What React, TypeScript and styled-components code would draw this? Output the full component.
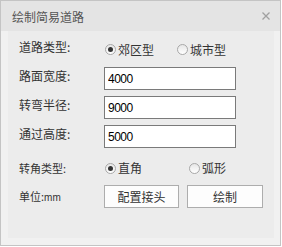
import styled, { createGlobalStyle } from "styled-components";

const GlobalStyle = createGlobalStyle`
  body {
    margin: 0;
    background: #ffffff;
    font-family: "Noto Sans CJK SC", "Noto Sans", sans-serif;
  }
`;

const Dialog = styled.div`
  width: 281px;
  height: 246px;
  box-sizing: border-box;
  border: 1px solid #c4c4c4;
  background: #f1f1f1;
  display: flex;
  flex-direction: column;
`;

const TitleBar = styled.div`
  height: 30px;
  flex-shrink: 0;
  background: #e4e4e4;
  display: flex;
  align-items: center;
  justify-content: space-between;
  padding: 0 10px 0 11px;
`;

const Title = styled.span`
  font-size: 12px;
  color: #555555;
`;

const Close = styled.svg`
  width: 8px;
  height: 8px;
`;

const Panel = styled.div`
  flex: 1;
  margin: 0 6px 7px 7px;
  background: #ececec;
  padding: 7px 0 0 11px;
  display: flex;
  flex-direction: column;
`;

const Row = styled.div<{ $h: number; $gap: number; $center?: boolean }>`
  display: flex;
  align-items: ${(p) => (p.$center ? "center" : "flex-start")};
  height: ${(p) => p.$h}px;
  margin-top: ${(p) => p.$gap}px;
`;

const Label = styled.span<{ $size?: number }>`
  width: 85px;
  flex-shrink: 0;
  font-size: ${(p) => p.$size ?? 12}px;
  line-height: 18px;
  color: #333333;
`;

const Unit = styled.span`
  font-family: "Liberation Sans", sans-serif;
  font-size: 10px;
`;

const Input = styled.input`
  width: 132px;
  height: 23px;
  box-sizing: border-box;
  border: 1px solid #7a7a7a;
  background: #ffffff;
  padding: 0 3px;
  margin: 0;
  font-family: "Liberation Sans", sans-serif;
  font-size: 12px;
  letter-spacing: -0.5px;
  color: #000000;
  outline: none;
`;

const Options = styled.div`
  display: flex;
  align-self: center;
  margin-left: 1px;
`;

const Option = styled.label<{ $w: number }>`
  display: flex;
  align-items: center;
  gap: 2px;
  width: ${(p) => p.$w}px;
  font-size: 12px;
  line-height: 18px;
  color: #333333;
`;

const Circle = styled.span<{ $checked?: boolean }>`
  position: relative;
  width: 11px;
  height: 11px;
  box-sizing: border-box;
  border-radius: 50%;
  border: 1px solid #a8a8a8;
  background: linear-gradient(#e6e6e6, #ffffff);

  &::after {
    content: "";
    display: ${(p) => (p.$checked ? "block" : "none")};
    position: absolute;
    left: 2px;
    top: 2px;
    width: 5px;
    height: 5px;
    border-radius: 50%;
    background: #333333;
  }
`;

const Buttons = styled.div`
  display: flex;
  gap: 8px;
`;

const Button = styled.button<{ $w: number }>`
  width: ${(p) => p.$w}px;
  height: 23px;
  box-sizing: border-box;
  border: 1px solid #adadad;
  background: #fdfdfd;
  padding: 0;
  font-family: "Noto Sans CJK SC", sans-serif;
  font-size: 12px;
  color: #333333;
`;

function Radio({ text, checked, w }: { text: string; checked?: boolean; w: number }) {
  return (
    <Option $w={w}>
      <Circle $checked={checked} />
      {text}
    </Option>
  );
}

export default function App() {
  return (
    <>
      <GlobalStyle />
      <Dialog>
        <TitleBar>
          <Title>绘制简易道路</Title>
          <Close viewBox="0 0 8 8">
            <path d="M0.5 0.5 L7.5 7.5 M7.5 0.5 L0.5 7.5" stroke="#a0a0a0" strokeWidth="1.3" />
          </Close>
        </TitleBar>
        <Panel>
          <Row $h={23} $gap={0}>
            <Label>道路类型:</Label>
            <Options>
              <Radio text="郊区型" checked w={72} />
              <Radio text="城市型" w={72} />
            </Options>
          </Row>
          <Row $h={23} $gap={6}>
            <Label>路面宽度:</Label>
            <Input defaultValue="4000" />
          </Row>
          <Row $h={23} $gap={6}>
            <Label>转弯半径:</Label>
            <Input defaultValue="9000" />
          </Row>
          <Row $h={23} $gap={6}>
            <Label>通过高度:</Label>
            <Input defaultValue="5000" />
          </Row>
          <Row $h={18} $gap={11}>
            <Label $size={11}>转角类型:</Label>
            <Options>
              <Radio text="直角" checked w={84} />
              <Radio text="弧形" w={60} />
            </Options>
          </Row>
          <Row $h={23} $gap={8} $center>
            <Label $size={11}>
              单位:<Unit>mm</Unit>
            </Label>
            <Buttons>
              <Button $w={75}>配置接头</Button>
              <Button $w={76}>绘制</Button>
            </Buttons>
          </Row>
        </Panel>
      </Dialog>
    </>
  );
}
